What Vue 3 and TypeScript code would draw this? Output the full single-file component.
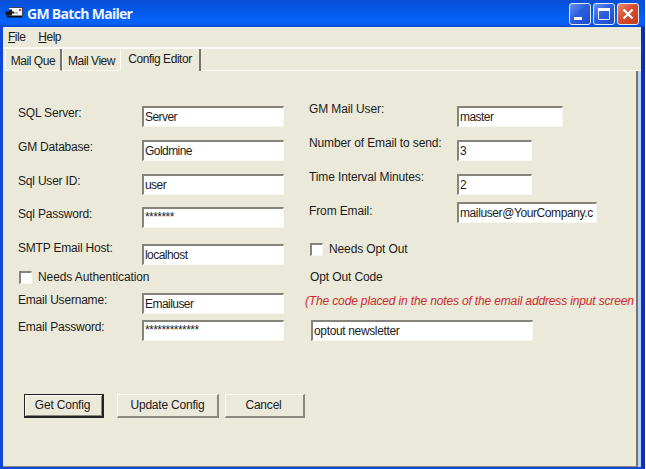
<template>
  <div class="window">
    <header class="title-bar">
      <svg class="app-icon" width="18" height="12" viewBox="0 0 18 12">
        <path d="M4 1h13v9H4z" fill="#fff" />
        <path d="M4 .5h13.5v9H3" fill="none" stroke="#39415c" />
        <path d="M0 5.5h9M1 7.5h6M4 3.5h3" stroke="#171717" stroke-width="2" />
        <path d="M9 6h4" stroke="#777" />
        <path d="M14 2h2v2h-2z" fill="#d33" />
        <path d="M2 9.5h15" stroke="#101010" stroke-width="2" />
      </svg>
      <h1>GM Batch Mailer</h1>
      <div class="window-buttons">
        <button class="win-btn" aria-label="Minimize">
          <svg width="20" height="20"><path d="M4 14.5h8" stroke="#fff" stroke-width="3" /></svg>
        </button>
        <button class="win-btn" aria-label="Maximize">
          <svg width="20" height="20">
            <path d="M4.5 5v10.5h11V5" fill="none" stroke="#e8efff" />
            <path d="M4 5.5h12" stroke="#fff" stroke-width="3" />
          </svg>
        </button>
        <button class="win-btn close" aria-label="Close">
          <svg width="20" height="20"><path d="M5.5 5.5l9 9m0-9l-9 9" stroke="#fff" stroke-width="2.4" /></svg>
        </button>
      </div>
    </header>

    <nav class="menu">
      <span><u>F</u>ile</span>
      <span><u>H</u>elp</span>
    </nav>

    <div class="tabs">
      <button
        v-for="tab in tabs"
        :key="tab"
        class="tab"
        :class="{ active: tab === activeTab }"
        @click="activeTab = tab"
      >{{ tab }}</button>
      <div class="tabs-rest"></div>
    </div>

    <main class="panel">
      <div class="columns">
        <section class="left">
          <div class="row"><label>SQL Server:</label><input v-model="form.server" /></div>
          <div class="row"><label>GM Database:</label><input v-model="form.database" /></div>
          <div class="row short"><label>Sql User ID:</label><input v-model="form.sqlUser" /></div>
          <div class="row password"><label>Sql Password:</label><input v-model="form.sqlPassword" class="stars" /></div>
          <div class="row host"><label>SMTP Email Host:</label><input v-model="form.host" /></div>
          <div class="row auth">
            <label class="check"><input v-model="form.needsAuth" type="checkbox" />Needs Authentication</label>
          </div>
          <div class="row username"><label>Email Username:</label><input v-model="form.emailUser" /></div>
          <div class="row"><label>Email Password:</label><input v-model="form.emailPassword" class="stars" /></div>
        </section>

        <section class="right">
          <div class="row"><label>GM Mail User:</label><input v-model="form.mailUser" class="medium" /></div>
          <div class="row"><label>Number of Email to send:</label><input v-model="form.count" class="small" /></div>
          <div class="row interval"><label>Time Interval Minutes:</label><input v-model="form.interval" class="small" /></div>
          <div class="row from"><label>From Email:</label><input v-model="form.from" class="wide" /></div>
          <div class="row opt">
            <label class="check"><input v-model="form.needsOptOut" type="checkbox" />Needs Opt Out</label>
          </div>
          <div class="row code">Opt Out Code</div>
          <div class="row hint">(The code placed in the notes of the email address input screen</div>
          <input v-model="form.optOutCode" class="opt-input" />
        </section>
      </div>

      <div class="actions">
        <button class="btn default">Get Config</button>
        <button class="btn update">Update Config</button>
        <button class="btn">Cancel</button>
      </div>
    </main>
  </div>
</template>

<script setup lang="ts">
import { reactive, ref } from 'vue'

const tabs = ['Mail Que', 'Mail View', 'Config Editor']
const activeTab = ref('Config Editor')

const form = reactive({
  server: 'Server',
  database: 'Goldmine',
  sqlUser: 'user',
  sqlPassword: '*******',
  host: 'localhost',
  needsAuth: false,
  emailUser: 'Emailuser',
  emailPassword: '*************',
  mailUser: 'master',
  count: '3',
  interval: '2',
  from: 'mailuser@YourCompany.c',
  needsOptOut: false,
  optOutCode: 'optout newsletter'
})
</script>

<style>
body {
  margin: 0;
  background: #fff;
}
</style>

<style scoped>
* {
  box-sizing: border-box;
}

.window {
  width: 645px;
  height: 469px;
  display: flex;
  flex-direction: column;
  border: solid #1048d8;
  border-width: 0 4px 2px 3px;
  border-right-color: #0831b8;
  background: #ebe9d9;
  color: #1c1c1c;
  font: 12px/14px "Liberation Sans", Arial, sans-serif;
  letter-spacing: -0.2px;
}

button,
input {
  font: inherit;
  color: inherit;
  letter-spacing: inherit;
  margin: 0;
}

/* title bar */
.title-bar {
  display: flex;
  align-items: center;
  height: 27px;
  margin: 0 -4px 0 -3px;
  padding: 0 6px 0 5px;
  background: linear-gradient(#0a50d8 0, #0457e6 35%, #0562f8 75%, #0660f5 88%, #0345c6);
}

.app-icon {
  margin-top: -2px;
}

h1 {
  flex: 1;
  margin: 0 0 0 4px;
  color: #eef3ff;
  font: bold 14px/20px "Open Sans", "Noto Sans", sans-serif;
  letter-spacing: -0.7px;
}

.window-buttons {
  display: flex;
  gap: 2px;
}

.win-btn {
  width: 22px;
  height: 22px;
  padding: 0;
  border: 1px solid #e4ebff;
  border-radius: 3px;
  background: linear-gradient(135deg, #6b94f0, #2c5fdf 45%, #1e4ccb);
}

.win-btn svg {
  display: block;
}

.win-btn.close {
  background: linear-gradient(135deg, #ee8a6c, #d94e2c 45%, #c23a1b);
}

/* menu */
.menu {
  display: flex;
  gap: 13px;
  height: 22px;
  padding: 3px 5px 0;
  border-bottom: 2px solid #fbfaf4;
  letter-spacing: -0.5px;
}

/* tabs */
.tabs {
  display: flex;
  height: 22px;
}

.tab {
  flex: none;
  width: 57px;
  padding: 3px 0 0;
  border: solid #fbfaf4;
  border-width: 0 0 1px 1px;
  background: none;
  white-space: nowrap;
  letter-spacing: -0.45px;
}

.tab:first-child {
  margin-left: 2px;
  border-right: 2px solid #77756b;
}

.tab:nth-child(2) {
  width: 59px;
  border-right: 1px solid #fbfaf4;
}

.tab.active {
  width: 80px;
  padding: 0 0 2px;
  border-bottom: 0;
  border-left: 0;
  border-right: 2px solid #77756b;
}

.tabs-rest {
  flex: 1;
  border-bottom: 1px solid #fbfaf4;
}

/* form */
.panel {
  flex: 1;
  border-right: 2px solid #77756b;
  border-bottom: 1px solid #8d8b80;
  margin-right: 3px;
  box-shadow: 3px 0 #b9d2fb;
}

.columns {
  display: flex;
  height: 288px;
  padding: 35px 0 0 15px;
}

.left {
  width: 291px;
}

.right {
  flex: 1;
  min-width: 0;
  letter-spacing: -0.12px;
}

.row {
  display: flex;
  align-items: flex-start;
  height: 34px;
  white-space: nowrap;
}

.row label:not(.check) {
  width: 124px;
}

.right .row label:not(.check) {
  width: 148px;
  margin-top: -4px;
}

input:not([type='checkbox']) {
  width: 142px;
  height: 21px;
  padding: 0 0 1px 1px;
  border: solid #86847a;
  border-width: 2px 1px 1px 2px;
  border-right-color: #f8f7f0;
  border-bottom-color: #f8f7f0;
  border-radius: 0;
  background: #fff;
  outline: none;
  letter-spacing: -0.55px;
}

input.stars {
  padding-bottom: 3px;
}

input.medium {
  width: 106px;
}

input.small {
  width: 75px;
}

.row input.wide {
  width: 140px;
  letter-spacing: -0.4px;
}

.row.short {
  height: 33px;
}

.row.password {
  height: 37px;
}

.row.host {
  height: 25px;
}

.row.host label {
  margin-top: -3px;
}

.row.auth {
  height: 24px;
}

.auth .check {
  margin-top: 1px;
  letter-spacing: -0.1px;
}

.row.username {
  height: 27px;
}

.row.interval {
  height: 28px;
}

.right .row.from label {
  margin-top: 2px;
}

.row.from {
  height: 41px;
}

.row.opt {
  height: 27px;
}

.row.code {
  height: 24px;
  padding-left: 1px;
}

.row.hint {
  height: 26px;
  margin-left: -4px;
  overflow: hidden;
  color: #cc2a2a;
  font-style: italic;
  letter-spacing: -0.15px;
}

.check {
  display: flex;
  align-items: center;
  gap: 6px;
  padding-left: 1px;
}

.check input {
  appearance: none;
  width: 13px;
  height: 13px;
  border: solid #86847a;
  border-width: 2px 1px 1px 2px;
  border-right-color: #f8f7f0;
  border-bottom-color: #f8f7f0;
  background: #fff;
}

.opt .check {
  margin-top: -1px;
}

.right input.opt-input {
  width: 222px;
  margin-left: 2px;
  letter-spacing: -0.35px;
}

/* buttons */
.actions {
  display: flex;
  padding: 35px 0 0 21px;
}

.btn {
  width: 80px;
  height: 24px;
  padding: 0 2px 1px 0;
  border: solid #fbfaf4;
  border-width: 1px 2px 2px 1px;
  border-right-color: #8a887d;
  border-bottom-color: #8a887d;
  background: #ebe9d9;
}

.btn.default {
  border-color: #222;
  box-shadow: inset 1px 1px #fbfaf4, inset -1px -1px #8a887d;
}

.btn.update {
  width: 102px;
  margin: 0 6px 0 13px;
  padding-right: 0;
}
</style>
